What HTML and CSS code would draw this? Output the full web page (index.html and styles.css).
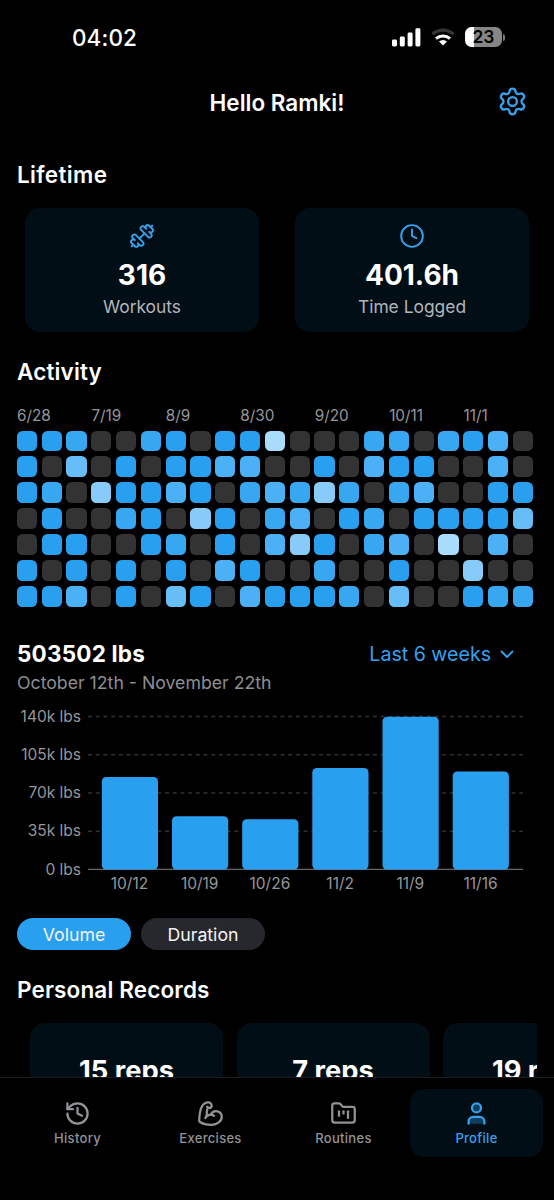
FILE: index.html
```html
<!DOCTYPE html>
<html lang="en">
<head>
<meta charset="utf-8">
<title>Profile</title>
<link rel="stylesheet" href="styles.css">
</head>
<body>
<div class="screen">
  <main class="content">
    <div class="status">
      <span class="time">04:02</span>
      <div class="status-icons">
        <svg class="signal" width="29" height="19" viewBox="0 0 29 19" fill="#fff"><rect x="0" y="11.5" width="5" height="7" rx="1.4"/><rect x="7.8" y="8.5" width="5" height="10" rx="1.4"/><rect x="15.6" y="4.5" width="5" height="14" rx="1.4"/><rect x="23.4" y="0.3" width="5" height="18.2" rx="1.4"/></svg>
        <svg class="wifi" width="24" height="18" viewBox="0 0 24 18"><path d="M1.5 6.3a15.5 15.5 0 0 1 21 0" fill="none" stroke="#363636" stroke-width="3.2"/><path d="M5 10.6a10.4 10.4 0 0 1 14 0" fill="none" stroke="#fff" stroke-width="3"/><path d="M8 13.6a6 6 0 0 1 8 0L12 17.6z" fill="#fff"/></svg>
        <div class="battery"><span>23</span></div>
        <div class="battery-cap"></div>
      </div>
    </div>

    <header class="header">
      <h1>Hello Ramki!</h1>
      <svg class="gear icon" width="31" height="31" viewBox="0 0 24 24"><path d="M9.671 4.136a2.34 2.34 0 0 1 4.659 0 2.34 2.34 0 0 0 3.319 1.915 2.34 2.34 0 0 1 2.33 4.033 2.34 2.34 0 0 0 0 3.831 2.34 2.34 0 0 1-2.33 4.033 2.34 2.34 0 0 0-3.319 1.915 2.34 2.34 0 0 1-4.659 0 2.34 2.34 0 0 0-3.32-1.915 2.34 2.34 0 0 1-2.33-4.033 2.34 2.34 0 0 0 0-3.831A2.34 2.34 0 0 1 6.35 6.051a2.34 2.34 0 0 0 3.319-1.915"/><circle cx="12" cy="12" r="3.4"/></svg>
    </header>

    <h2 class="title lifetime">Lifetime</h2>
    <section class="stats">
      <div class="stat">
        <svg class="icon" width="26" height="26" viewBox="0 0 24 24"><path d="M17.596 12.768a2 2 0 1 0 2.829-2.829l-1.768-1.767a2 2 0 0 0 2.828-2.829l-2.828-2.828a2 2 0 0 0-2.829 2.828l-1.767-1.768a2 2 0 1 0-2.829 2.829z"/><path d="m2.5 21.5 1.4-1.4"/><path d="m20.1 3.9 1.4-1.4"/><path d="M5.343 21.485a2 2 0 1 0 2.829-2.828l1.767 1.768a2 2 0 1 0 2.829-2.829l-6.364-6.364a2 2 0 1 0-2.829 2.829l1.768 1.767a2 2 0 0 0-2.828 2.829z"/><path d="m9.6 14.4 4.8-4.8"/></svg>
        <strong>316</strong>
        <span>Workouts</span>
      </div>
      <div class="stat">
        <svg class="icon" width="26" height="26" viewBox="0 0 24 24"><circle cx="12" cy="12" r="10"/><path d="M12 6v6l4 2"/></svg>
        <strong>401.6h</strong>
        <span>Time Logged</span>
      </div>
    </section>

    <h2 class="title activity">Activity</h2>
    <div class="weeks"><span>6/28</span><span>7/19</span><span>8/9</span><span>8/30</span><span>9/20</span><span>10/11</span><span>11/1</span></div>
    <div class="heatmap" id="heatmap"></div>

    <section class="summary">
      <div>
        <h2 class="title total">503502 lbs</h2>
        <p>October 12th - November 22th</p>
      </div>
      <div class="range">Last 6 weeks
        <svg width="14" height="9" viewBox="0 0 14 9"><path d="M1.5 1.5 7 7l5.500-5.500"/></svg>
      </div>
    </section>

    <svg class="chart" width="554" height="200" viewBox="0 700 554 200">
      <g class="grid"><path d="M88 716.500H523"/><path d="M88 754.700H523"/><path d="M88 792.900H523"/><path d="M88 831.200H523"/></g>
      <path class="axis" d="M88 869.400H523"/>
      <g class="bars">
        <rect x="101.800" y="777" width="56.200" height="92.500" rx="4.500"/>
        <rect x="172" y="816.200" width="56.200" height="53.300" rx="4.500"/>
        <rect x="242.200" y="819.300" width="56.200" height="50.200" rx="4.500"/>
        <rect x="312.300" y="768" width="56.200" height="101.500" rx="4.500"/>
        <rect x="382.500" y="716.800" width="56.200" height="152.700" rx="4.500"/>
        <rect x="452.700" y="771.500" width="56.200" height="98" rx="4.500"/>
      </g>
      <g class="y-labels">
        <text x="81" y="721.700">140k lbs</text><text x="81" y="759.900">105k lbs</text><text x="81" y="798.100">70k lbs</text><text x="81" y="836.400">35k lbs</text><text x="81" y="874.600">0 lbs</text>
      </g>
      <g class="x-labels">
        <text x="129.500" y="889">10/12</text><text x="199.700" y="889">10/19</text><text x="269.900" y="889">10/26</text><text x="340.200" y="889">11/2</text><text x="410.300" y="889">11/9</text><text x="480.500" y="889">11/16</text>
      </g>
    </svg>

    <div class="pills"><span class="pill on">Volume</span><span class="pill">Duration</span></div>

    <h2 class="title records-title">Personal Records</h2>
    <div class="records">
      <div class="record">15 reps</div>
      <div class="record">7 reps</div>
      <div class="record">19 reps</div>
    </div>
  </main>

  <nav class="tabs">
    <div class="tab"><svg class="icon" width="27" height="27" viewBox="0 0 24 24"><path d="M3 12a9 9 0 1 0 9-9 9.750 9.750 0 0 0-6.740 2.740L3 8"/><path d="M3 3v5h5"/><path d="M12 7v5l4 2"/></svg>History</div>
    <div class="tab"><svg class="icon" width="27" height="27" viewBox="0 0 24 24"><path d="M12.409 13.017A5 5 0 0 1 22 15c0 3.866-4 7-9 7-4.077 0-8.153-.82-10.371-2.462-.426-.316-.631-.832-.62-1.362C2.118 12.723 2.627 2 10 2a3 3 0 0 1 3 3 2 2 0 0 1-2 2c-1.105 0-1.640-.444-2-1"/><path d="M15 14a5 5 0 0 0-7.584 2"/><path d="M9.964 6.825C8.019 7.977 9.500 13 8 15"/></svg>Exercises</div>
    <div class="tab"><svg class="icon" width="27" height="27" viewBox="0 0 24 24"><path d="M4 20h16a2 2 0 0 0 2-2V8a2 2 0 0 0-2-2h-7.930a2 2 0 0 1-1.660-.9l-.82-1.200A2 2 0 0 0 7.930 3H4a2 2 0 0 0-2 2v13c0 1.100.9 2 2 2Z"/><path d="M8 10v4"/><path d="M12 10v2"/><path d="M16 10v6"/></svg>Routines</div>
    <div class="tab active"><svg class="icon" width="27" height="27" viewBox="0 0 24 24"><path d="M19 21v-2a4 4 0 0 0-4-4H9a4 4 0 0 0-4 4v2"/><circle cx="12" cy="7" r="4"/></svg>Profile</div>
  </nav>
</div>
<script src="heatmap.js"></script>
</body>
</html>
```

FILE: styles.css
```css
* { box-sizing: border-box; }
body { margin: 0; background: #000; font-family: Inter, "Liberation Sans", sans-serif; color: #fff; }
h1, h2, p { margin: 0; }
.screen { width: 554px; height: 1200px; display: flex; flex-direction: column; overflow: hidden; }
.content { height: 1077px; overflow: hidden; display: flex; flex-direction: column; flex: none; }
.content > * { flex: none; }
.icon { display: block; fill: none; stroke: currentColor; stroke-width: 1.75; stroke-linecap: round; stroke-linejoin: round; }

.status { height: 74px; padding: 0 49px 0 72px; display: flex; align-items: center; justify-content: space-between; }
.time { font-size: 22.5px; font-weight: 500; letter-spacing: 0.1px; }
.status-icons { display: flex; align-items: center; }
.wifi { margin-left: 10px; }
.battery { margin-left: 10px; width: 37px; height: 20px; border-radius: 6.5px; background: linear-gradient(90deg, #fff 24%, #868686 24%); color: #050505; display: flex; align-items: center; justify-content: center; font-size: 17.5px; font-weight: 600; line-height: 20px; }
.battery-cap { width: 2px; height: 7px; margin-left: 1px; border-radius: 0 3px 3px 0; background: #777; }

.header { height: 56px; padding: 0 26.5px; display: grid; grid-template-columns: 1fr auto 1fr; align-items: center; }
.header h1 { grid-column: 2; font-size: 22.5px; font-weight: 600; letter-spacing: 0; }
.gear { justify-self: end; color: #36a2ee; stroke-width: 1.8; margin-top: -2px; }

.title { padding-left: 17px; height: 30px; line-height: 30px; font-size: 22.5px; font-weight: 600; letter-spacing: 0.15px; }
.lifetime { margin-top: 30px; letter-spacing: 0.35px; }
.stats { margin: 18px 25px 0; display: grid; grid-template-columns: 1fr 1fr; gap: 36px; }
.stat { height: 124px; border-radius: 15px; background: #020e16; display: flex; flex-direction: column; align-items: center; padding-top: 15px; }
.stat .icon { color: #36a2ee; }
.stat strong { margin-top: 9px; height: 35px; line-height: 35px; font-size: 28px; font-weight: 700; }
.stat span { height: 26px; line-height: 27px; font-size: 17.4px; color: #b1b5b9; }

.activity { margin-top: 25px; }
.weeks { margin: 20px 17px 0; height: 18px; line-height: 18px; display: grid; grid-template-columns: repeat(7, 1fr); width: 521px; color: #96969a; font-size: 15.3px; }
.heatmap { margin: 5.500px 0 0 16.800px; display: grid; grid-template-columns: repeat(21, 20.200px); grid-auto-rows: 20.800px; column-gap: 4.620px; row-gap: 5.150px; }
.cell { border-radius: 5.500px; background: #333; }
.cell.a { background: #289fef; }
.cell.b { background: #38a7f2; }
.cell.c { background: #4bb0f5; }
.cell.d { background: #66bdf7; }
.cell.e { background: #88cbf8; }
.cell.f { background: #a9dbfb; }

.summary { margin-top: 32.500px; height: 61px; display: flex; justify-content: space-between; padding-right: 40px; }
.summary .total { font-weight: 700; letter-spacing: 0.2px; }
.summary p { padding-left: 17px; line-height: 28px; font-size: 17.7px; color: #8e8e93; }
.range { height: 30px; display: flex; align-items: center; gap: 9px; font-size: 19.6px; color: #36a2ee; }
.range svg { fill: none; stroke: currentColor; stroke-width: 1.8; stroke-linecap: round; stroke-linejoin: round; }

.chart { display: block; font-size: 15.500px; }
.grid { stroke: #303030; stroke-width: 1.500; stroke-dasharray: 4 3.700; }
.axis { stroke: #68686b; stroke-width: 1.400; }
.bars { fill: #289fef; }
.y-labels, .x-labels { fill: #96969a; }
.y-labels { text-anchor: end; }
.x-labels { text-anchor: middle; }

.pills { margin: 18px 0 0 17px; display: flex; gap: 10px; }
.pill { width: 124px; height: 32px; border-radius: 16px; background: #27272e; display: flex; align-items: center; justify-content: center; font-size: 17.7px; color: #f4f4f5; }
.pill.on { width: 114px; background: #289fef; }

.records-title { margin-top: 25px; }
.records { margin: 18px 17px 0 30px; height: 100px; display: flex; gap: 13.500px; overflow: hidden; }
.record { flex: none; width: 193px; height: 140px; border-radius: 15px; background: #020e16; text-align: center; padding-top: 30px; line-height: 35px; font-size: 27.3px; font-weight: 700; }

.tabs { height: 123px; border-top: 1px solid #1c1c1d; display: flex; align-items: flex-start; padding: 11px 11px 0; background: #000; }
.tab { flex: 1; height: 68px; border-radius: 14px; padding-top: 11px; display: flex; flex-direction: column; align-items: center; gap: 2px; font-size: 13px; line-height: 18px; font-weight: 500; letter-spacing: 0.300px; color: #939397; }
.tab .icon { stroke-width: 2; }
.tab.active { background: #020e16; color: #36a2ee; }
.tab.active .icon { fill: #123e5d; }
```

FILE: heatmap.js
```js
const rows = [
  "aab00ba0aaf000bb0bac0",
  "a0d0a0aacc00a0caa00c0",
  "ab0eaaca0bcbeb0bc00aa",
  "0a00ba0ea0bc0ab0aaaad",
  "0aa00ab0a0cea0bc0f0c0",
  "a0a0a0a0ca00b00a00e00",
  "aac0a0da0caaab0d00abb"
];
const heatmap = document.getElementById("heatmap");
for (const row of rows) {
  for (const level of row) {
    const cell = document.createElement("div");
    cell.className = level === "0" ? "cell" : "cell " + level;
    heatmap.appendChild(cell);
  }
}
```
